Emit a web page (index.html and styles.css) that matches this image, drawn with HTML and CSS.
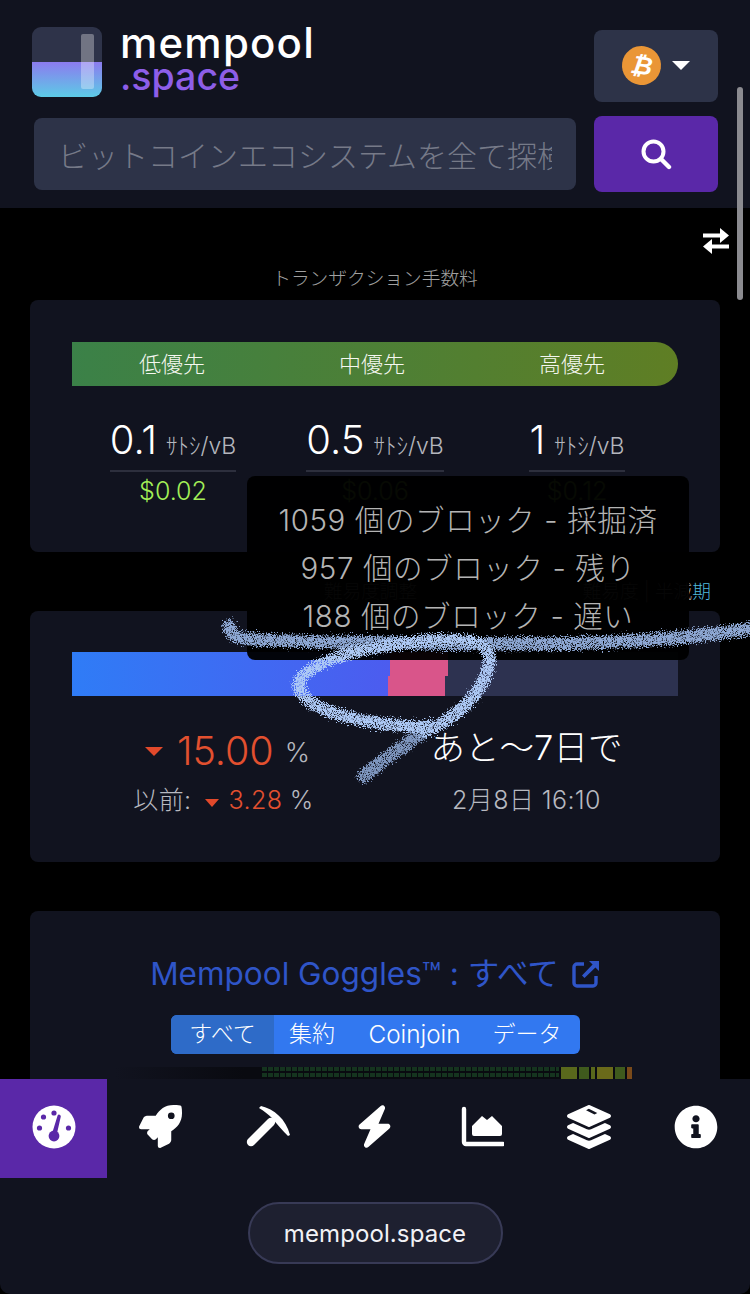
FILE: index.html
```html
<!DOCTYPE html>
<html lang="ja">
<head>
<meta charset="utf-8">
<title>mempool</title>
<link rel="stylesheet" href="styles.css">
</head>
<body>
<div class="page">
  <header class="header">
    <div class="row-top">
      <a class="brand">
        <svg class="logo" viewBox="0 0 70 70" width="70" height="70">
          <defs>
            <linearGradient id="lg" x1="0" y1="0" x2="0" y2="1"><stop offset="0" stop-color="#8c7bef"/><stop offset="1" stop-color="#5ccbe6"/></linearGradient>
            <clipPath id="lc"><rect width="70" height="70" rx="9"/></clipPath>
          </defs>
          <g clip-path="url(#lc)">
            <rect width="70" height="35" fill="#2e3349"/>
            <rect y="35" width="70" height="35" fill="url(#lg)"/>
          </g>
          <rect x="49" y="7" width="13" height="55" rx="2" fill="#fff" fill-opacity=".32"/>
        </svg>
        <span class="wordmark"><span class="wm-a">mempool</span><span class="wm-b">.space</span></span>
      </a>
      <button class="currency">
        <span class="coin">₿</span>
        <span class="caret"></span>
      </button>
    </div>
    <div class="row-search">
      <input class="search" type="text" placeholder="ビットコインエコシステムを全て探検">
      <button class="search-btn">
        <svg viewBox="0 0 32 32" width="32" height="32"><circle cx="13.5" cy="13.5" r="10" fill="none" stroke="#fff" stroke-width="4"/><path d="M21 21l8 8" stroke="#fff" stroke-width="4.4" stroke-linecap="round"/></svg>
      </button>
    </div>
  </header>

  <main class="main">
    <div class="toggle-row">
      <svg viewBox="0 0 28 26" width="28" height="26"><path d="M1 7.5h19" stroke="#fff" stroke-width="4"/><path d="M18 0l9 7.5-9 7.5z" fill="#fff"/><path d="M27 18.5H8" stroke="#fff" stroke-width="4"/><path d="M10 11l-9 7.5 9 7.500z" fill="#fff"/></svg>
    </div>
    <div class="label-row first"><span></span><span class="label">トランザクション手数料</span><span></span></div>
    <section class="card fee-card">
      <div class="fee-bar"><span>低優先</span><span>中優先</span><span>高優先</span></div>
      <div class="fee-grid">
        <div class="fee-col">
          <div class="fee-val"><b>0.1</b><small>ｻﾄｼ/vB</small></div>
          <div class="fiat">$0.02</div>
        </div>
        <div class="fee-col">
          <div class="fee-val"><b>0.5</b><small>ｻﾄｼ/vB</small></div>
          <div class="fiat">$0.06</div>
        </div>
        <div class="fee-col">
          <div class="fee-val"><b>1</b><small>ｻﾄｼ/vB</small></div>
          <div class="fiat">$0.12</div>
        </div>
      </div>
    </section>

    <div class="label-row second"><span></span><span class="label">難易度調整</span><span class="label end">難易度 | 半減<i>期</i></span></div>
    <section class="card diff-card">
      <div class="progress">
        <div class="prog-line upper"><span class="p-blue"></span><span class="p-pink"></span></div>
        <div class="prog-line lower"><span class="p-blue"></span><span class="p-pink"></span></div>
      </div>
      <div class="diff-grid">
        <div class="diff-col">
          <div class="big"><span class="tri"></span><span class="pct">15.00</span><span class="unit">%</span></div>
          <div class="sub">以前:<span class="tri small"></span><span class="pct-s">3.28</span> %</div>
        </div>
        <div class="diff-col">
          <div class="eta">あと〜7日で</div>
          <div class="sub">2月8日 16:10</div>
        </div>
      </div>
    </section>

    <section class="card goggles-card">
      <h2 class="goggles-title">Mempool Goggles™ : すべて
        <svg viewBox="0 0 28 28" width="28" height="28"><path d="M12 4H5a3 3 0 0 0-3 3v16a3 3 0 0 0 3 3h16a3 3 0 0 0 3-3v-7" fill="none" stroke="#2f55c8" stroke-width="3.4"/><path d="M17 1h10v10l-3.6-3.6L12.5 18 10 15.5 20.6 4.6z" fill="#2f55c8"/></svg>
      </h2>
      <div class="tabs"><span class="tab on">すべて</span><span class="tab t2">集約</span><span class="tab t3">Coinjoin</span><span class="tab t4">データ</span></div>
      <div class="graph">
        <div class="cells"></div>
        <span class="blk b1"></span><span class="blk b2"></span><span class="blk b3"></span><span class="blk b4"></span><span class="blk b5"></span><span class="blk b6"></span>
      </div>
    </section>
  </main>

  <footer class="footer">
    <nav class="nav">
      <a class="nav-item active">
        <svg viewBox="0 0 44 44" width="44" height="44"><circle cx="22" cy="22" r="21.5" fill="#fff"/><g fill="#5a28a8"><circle cx="22" cy="8" r="2.6"/><circle cx="11.5" cy="12" r="2.6"/><circle cx="7.5" cy="23" r="2.6"/><circle cx="36.5" cy="23" r="2.6"/><circle cx="22" cy="31" r="5.4"/><path d="M19.6 30l6-19.5a1.7 1.7 0 0 1 3.2 1L24.4 31z"/></g></svg>
      </a>
      <a class="nav-item">
        <svg viewBox="0 0 512 512" width="43" height="43"><path fill="#fff" d="M505.12019,19.09375c-1.18945-5.53125-6.65819-11-12.207-12.1875C460.716,0,435.507,0,410.40747,0,307.17523,0,245.26909,55.20312,199.05238,128H94.83772c-16.34763.01562-35.55658,11.875-42.88664,26.48438L2.51562,253.29688A28.4,28.4,0,0,0,0,264a24.00867,24.00867,0,0,0,24.00582,24H127.81618l-22.47457,22.46875c-11.36521,11.36133-12.99607,32.25781,0,45.25L156.24582,406.625c11.15623,11.1875,32.15619,13.15625,45.27726,0l22.47457-22.46875V488a24.00867,24.00867,0,0,0,24.00581,24,28.55934,28.55934,0,0,0,10.707-2.51562l98.72834-49.39063c14.62888-7.29687,26.50776-26.5,26.50776-42.85937V312.79688c72.59753-46.3125,128.03493-108.40626,128.03493-211.09376C512.07526,76.5,512.07526,51.29688,505.12019,19.09375ZM384.04033,168A40,40,0,1,1,424.05,128,40.02322,40.02322,0,0,1,384.04033,168Z"/></svg>
      </a>
      <a class="nav-item">
        <svg viewBox="0 0 44 44" width="44" height="44"><path d="M25 17L5 37" stroke="#fff" stroke-width="8.4" stroke-linecap="round"/><path fill="#fff" d="M13 3l2-2c13 3 25 13 29 29l-2 1c-5-5-11-12-16-18-4-4-8-7-13-10z"/></svg>
      </a>
      <a class="nav-item">
        <svg viewBox="0 0 448 512" width="37" height="43"><path fill="#fff" d="M349.4 44.6c5.9-13.7 1.5-29.7-10.6-38.5s-28.6-8-39.9 1.8l-256 224c-10 8.8-13.6 22.9-8.9 35.3S50.7 288 64 288H175.5L98.6 467.4c-5.9 13.7-1.5 29.7 10.6 38.5s28.6 8 39.9-1.8l256-224c10-8.8 13.5-22.9 8.9-35.3s-16.6-20.7-30-20.7H272.5L349.4 44.6z"/></svg>
      </a>
      <a class="nav-item">
        <svg viewBox="0 0 44 44" width="44" height="44"><path d="M4 4v33a2 2 0 0 0 2 2h37" fill="none" stroke="#fff" stroke-width="4.4" stroke-linecap="round"/><path fill="#fff" d="M14 31a2 2 0 0 1-2-2v-8l10-10 5 4 5-4 10 10v8a2 2 0 0 1-2 2z"/></svg>
      </a>
      <a class="nav-item">
        <svg viewBox="0 0 512 512" width="44" height="44"><path fill="#fff" d="M12.41 148.02l232.94 105.67c6.8 3.09 14.49 3.09 21.29 0l232.94-105.67c16.55-7.51 16.55-32.52 0-40.03L266.65 2.31a25.607 25.607 0 0 0-21.29 0L12.41 107.98c-16.55 7.51-16.55 32.53 0 40.04zm487.18 88.28l-58.09-26.33-161.64 73.27c-7.56 3.43-15.59 5.17-23.86 5.17s-16.29-1.74-23.86-5.17L70.51 209.97l-58.1 26.33c-16.55 7.5-16.55 32.5 0 40l232.94 105.59c6.8 3.08 14.49 3.08 21.29 0L499.59 276.3c16.55-7.5 16.55-32.5 0-40zm0 127.8l-57.87-26.23-161.86 73.37c-7.56 3.43-15.59 5.17-23.86 5.17s-16.29-1.74-23.86-5.17L70.29 337.87 12.41 364.1c-16.55 7.5-16.55 32.5 0 40l232.94 105.59c6.8 3.08 14.49 3.08 21.29 0L499.59 404.1c16.55-7.5 16.55-32.5 0-40z"/><path fill="#11131f" d="M222 60l32-16 98 50-32 16z"/></svg>
      </a>
      <a class="nav-item">
        <svg viewBox="0 0 512 512" width="44" height="44"><path fill="#fff" d="M256 8C119.043 8 8 119.083 8 256c0 136.997 111.043 248 248 248s248-111.003 248-248C504 119.083 392.957 8 256 8zm0 110c23.196 0 42 18.804 42 42s-18.804 42-42 42-42-18.804-42-42 18.804-42 42-42zm56 254c0 6.627-5.373 12-12 12h-88c-6.627 0-12-5.373-12-12v-24c0-6.627 5.373-12 12-12h12v-64h-12c-6.627 0-12-5.373-12-12v-24c0-6.627 5.373-12 12-12h64c6.627 0 12 5.373 12 12v100h12c6.627 0 12 5.373 12 12v24z"/></svg>
      </a>
    </nav>
    <div class="pill-wrap"><span class="pill">mempool.space</span></div>
  </footer>

  <div class="tooltip">
    <div>1059 個のブロック - 採掘済</div>
    <div>957 個のブロック - 残り</div>
    <div>188 個のブロック - 遅い</div>
  </div>

  <div class="scrollbar"></div>

  <svg class="scribble" viewBox="0 0 750 1294" width="750" height="1294">
    <defs>
      <filter id="rough" filterUnits="userSpaceOnUse" x="200" y="600" width="560" height="200">
        <feTurbulence type="fractalNoise" baseFrequency="0.8" numOctaves="2" seed="4" result="n"/>
        <feDisplacementMap in="SourceGraphic" in2="n" scale="13" xChannelSelector="R" yChannelSelector="G" result="d"/>
        <feTurbulence type="fractalNoise" baseFrequency="1.1" numOctaves="1" seed="9" result="n2"/>
        <feColorMatrix in="n2" type="matrix" values="0 0 0 0 0  0 0 0 0 0  0 0 0 0 0  0 0 0 5 -1.4" result="m"/>
        <feComposite in="d" in2="m" operator="in"/>
      </filter>
    </defs>
    <g filter="url(#rough)" fill="none" stroke-linecap="round" stroke-linejoin="round">
      <path class="s-line" d="M229 626c2 10 8 12 22 13 50 4 110 3 170 4 60 1 130 2 190-1 50-2 100-7 145-14"/>
      <path class="s-tail" d="M364 776C385 758 410 742 432 726"/>
      <path class="s-loop" d="M432 726C400 728 360 722 330 712 305 702 295 690 300 680 310 665 345 652 380 647 420 640 465 635 482 645 495 655 490 670 478 690 468 705 450 720 425 732"/>
    </g>
  </svg>
</div>
</body>
</html>
```
FILE: styles.css
```css
* { box-sizing: border-box; }
html, body { margin: 0; padding: 0; background: #000; }
body {
  font-family: Inter, "Noto Sans CJK JP", "Noto Sans", sans-serif;
  color: #fff;
  overflow: hidden;
}
.page {
  position: relative;
  width: 750px;
  height: 1294px;
  display: flex;
  flex-direction: column;
  overflow: hidden;
  background: #000;
}

/* header */
.header {
  height: 208px;
  flex: none;
  background: #11131f;
  padding: 27px 32px 16px;
}
.row-top { display: flex; justify-content: space-between; align-items: flex-start; height: 75px; }
.brand { display: flex; align-items: flex-start; gap: 18px; }
.logo { display: block; }
.wordmark { display: flex; flex-direction: column; margin-top: -3px; }
.wm-a { font-size: 42px; font-weight: 500; line-height: 38px; letter-spacing: 1.2px; color: #fff; }
.wm-b { font-size: 37.5px; font-weight: 500; line-height: 31px; color: #8d5ee8; margin-top: -1px; }
.currency {
  width: 124px; height: 72px; margin-top: 3px;
  background: #2d3348; border: 0; border-radius: 8px;
  display: flex; align-items: center; justify-content: center; gap: 11px; padding: 0 0 2px 0;
}
.coin {
  width: 39px; height: 39px; border-radius: 50%;
  background: #ea9636; color: #fff;
  font: italic bold 25px/39px "DejaVu Sans", sans-serif;
  text-align: center;
  transform: rotate(8deg);
}
.caret { width: 0; height: 0; border-left: 9px solid transparent; border-right: 9px solid transparent; border-top: 9px solid #fff; }
.row-search { display: flex; justify-content: space-between; align-items: center; margin-top: 14px; padding-left: 2px; }
.search {
  width: 542px; height: 72px;
  background: #2d3348; border: 0; border-radius: 8px;
  padding: 0 24px 0 24px;
  font: 300 30px "Noto Sans CJK JP", sans-serif;
  color: #fff; outline: none;
}
.search::placeholder { color: #767a88; opacity: 1; }
.search-btn {
  width: 124px; height: 76px;
  background: #5a28a8; border: 0; border-radius: 8px;
  display: flex; align-items: center; justify-content: center; padding: 0;
}

/* main */
.main { flex: 1; min-height: 0; overflow: hidden; padding: 0 30px; }
.toggle-row { display: flex; justify-content: flex-end; padding: 20px 0 0; height: 56px; margin-right: -10px; }
.label-row { display: grid; grid-template-columns: 1fr auto 1fr; align-items: center; }
.label-row.first { height: 36px; padding-bottom: 6px; }
.label-row.second { height: 59px; padding: 20px 9px 0 0; }
.label { font-size: 18.7px; font-weight: 300; color: #a0a0a0; line-height: 24px; white-space: nowrap; }
.label.end { justify-self: end; }
.label i { font-style: normal; color: #4fb8dc; }
.card { background: #11131f; border-radius: 8px; padding: 42px; }
.fee-card { height: 252px; }
.fee-bar {
  height: 44px;
  display: flex;
  background: linear-gradient(90deg, #3b8148, #5f7e24);
  border-radius: 0 22px 22px 0;
  font-size: 22px; font-weight: 300; color: #f5f7f0;
}
.fee-bar span { flex: 0 0 200px; text-align: center; line-height: 44px; }
.fee-grid { display: grid; grid-template-columns: repeat(3, 1fr); margin-top: 31px; }
.fee-col { display: flex; flex-direction: column; align-items: center; }
.fee-val {
  display: flex; align-items: baseline; gap: 9px;
  height: 55px;
  border-bottom: 2px solid #2d2f3d;
  line-height: 45px;
  white-space: nowrap;
}
.fee-val b { font-weight: 300; font-size: 40px; color: #fff; }
.fee-val small { font-size: 23px; font-weight: 300; color: #b4b6bd; }
.fiat { font-size: 25px; font-weight: 300; color: #a3ef58; line-height: 30px; margin-top: 4px; }

.diff-card { height: 251px; padding-top: 41px; }
.progress { height: 44px; background: #2d3250; display: flex; flex-direction: column; }
.prog-line { display: flex; }
.prog-line.upper { height: 24px; }
.prog-line.lower { height: 20px; }
.p-blue { display: block; width: 316px; background: linear-gradient(90deg, #2f7cf6, #4c5cef); }
.p-pink { display: block; width: 57px; background: #d9558a; }
.upper .p-blue { width: 318px; }
.upper .p-pink { width: 58px; }
.diff-grid { display: grid; grid-template-columns: 1fr 1fr; margin-top: 26px; }
.diff-col { display: flex; flex-direction: column; align-items: center; }
.big { display: flex; align-items: center; height: 58px; margin-left: 8px; }
.tri { display: inline-block; width: 0; height: 0; border-left: 9px solid transparent; border-right: 9px solid transparent; border-top: 9px solid #e2492b; margin-right: 14px; }
.tri.small { border-left-width: 7px; border-right-width: 7px; border-top-width: 8px; margin: 0 10px 0 13px; vertical-align: 2px; }
.pct { font-size: 39.5px; font-weight: 300; color: #e2502f; }
.unit { font-size: 27px; font-weight: 300; color: #b4b6bd; margin-left: 11px; padding-top: 3px; }
.sub { font-size: 25px; font-weight: 300; letter-spacing: .4px; color: #b7b9c0; line-height: 38px; margin-top: 1px; white-space: nowrap; }
.pct-s { color: #e2502f; }
.eta { font-size: 34.5px; font-weight: 300; color: #fff; height: 58px; line-height: 52px; }

.goggles-card { margin-top: 49px; padding: 42px 0 0; height: 300px; }
.goggles-title {
  margin: 0; text-align: center;
  font-size: 31.5px; font-weight: 400; color: #2f55c8; line-height: 42px;
  display: flex; align-items: center; justify-content: center; gap: 13px;
}
.tabs {
  display: flex; width: 409px; height: 39px;
  margin: 20px 0 0 141px;
  background: #3278f0; border-radius: 6px; overflow: hidden;
  font-size: 23px; font-weight: 300; line-height: 38px;
}
.tab { text-align: center; color: #fff; }
.tab.on { width: 103px; background: #2e6bc8; }
.tab.t2 { width: 76px; }
.tab.t3 { width: 129px; font-size: 24.3px; }
.tab.t4 { flex: 1; padding-right: 5px; }
.graph {
  margin: 13px 0 0 85px; width: 517px; height: 12px;
  display: flex; gap: 2px;
  padding-left: 147px;
  background: linear-gradient(90deg, #11131f, #090a10 25%);
}
.cells {
  width: 298px; height: 12px;
  background:
    linear-gradient(#0000 4px, #090a10 4px) 0 0 / 100% 6px,
    linear-gradient(90deg, #15341f 5px, #0000 5px) 0 0 / 6px 100%;
}
.blk { display: block; height: 12px; }
.b1 { width: 16px; background: #59681c; }
.b2 { width: 10px; background: #3f5a1d; }
.b3 { width: 4px; background: #59681c; }
.b4 { width: 16px; background: #6a6a1a; }
.b5 { width: 10px; background: #3f5a1d; }
.b6 { width: 5px; background: #7a4a1a; }

/* footer */
.footer { height: 215px; flex: none; background: #11131f; border-radius: 0 0 10px 10px; position: relative; z-index: 1; }
.nav { display: flex; height: 99px; }
.nav-item { flex: 1; display: flex; align-items: flex-start; justify-content: center; padding-top: 26px; }
.nav-item.active { background: #5a28a8; }
.pill-wrap { display: flex; justify-content: center; margin-top: 24px; }
.pill {
  width: 255px; height: 62px;
  border: 2px solid #383a56; border-radius: 31px;
  background: #1e2030;
  font-size: 24px; color: #f2f2f6;
  letter-spacing: .1px;
  text-align: center; line-height: 60px;
}

/* overlays */
.tooltip {
  position: absolute; left: 247px; top: 476px; width: 442px; height: 184px;
  background: rgba(0, 0, 0, .96);
  border-radius: 8px;
  z-index: 2;
  padding-top: 20px;
  text-align: center;
  font-size: 29.5px; font-weight: 300; line-height: 48px;
  letter-spacing: .6px;
  color: #b4b4b4;
}
.scrollbar { position: absolute; right: 7px; top: 87px; width: 6px; height: 213px; border-radius: 3px; background: #8b8b90; z-index: 3; }
.scribble { position: absolute; left: 0; top: 0; z-index: 4; pointer-events: none; }
.s-line { stroke: #8ea8d4; stroke-width: 13; }
.s-tail { stroke: #7f97c0; stroke-width: 13; }
.s-loop { stroke: #adc9f5; stroke-width: 12; }
```
